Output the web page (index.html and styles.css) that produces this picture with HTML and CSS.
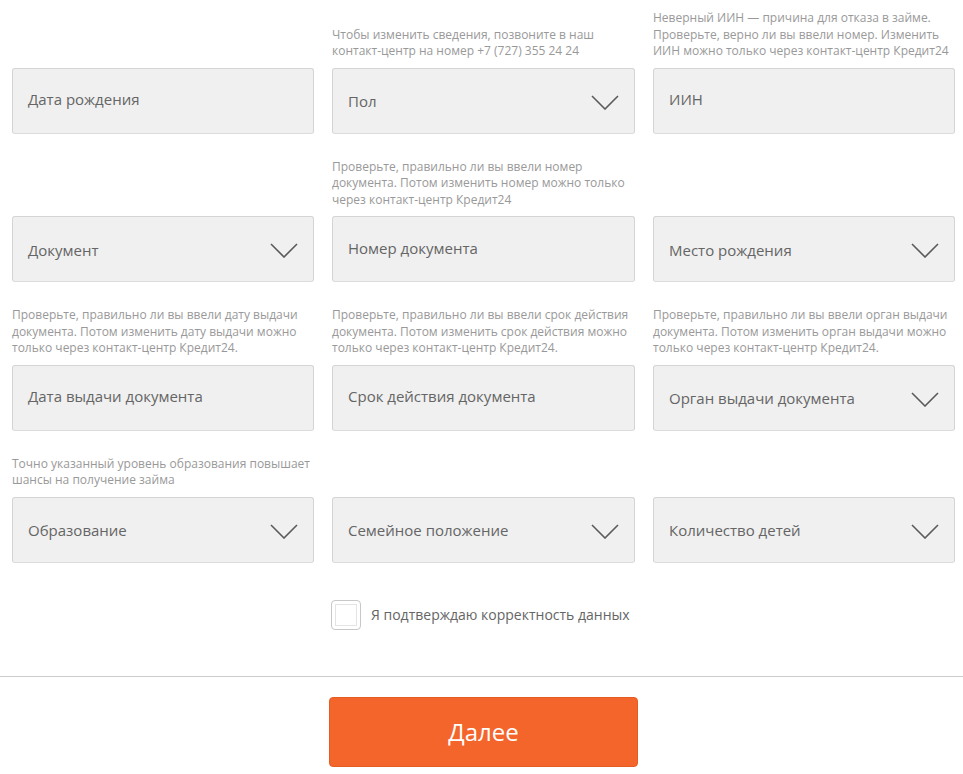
FILE: index.html
```html
<!DOCTYPE html>
<html lang="ru">
<head>
<meta charset="utf-8">
<title>Анкета</title>
<link rel="stylesheet" href="styles.css">
</head>
<body>
<form class="page">
  <div class="grid">
    <div class="cell">
      <div class="field input"><span class="ph">Дата рождения</span></div>
    </div>
    <div class="cell">
      <p class="hint">Чтобы изменить сведения, позвоните в наш контакт-центр на номер +7 (727) 355 24 24</p>
      <div class="field select"><span class="ph">Пол</span><svg class="chev" viewBox="0 0 28 15"><polyline points="1,1 14,14 27,1"/></svg></div>
    </div>
    <div class="cell">
      <p class="hint">Неверный ИИН — причина для отказа в займе. Проверьте, верно ли вы ввели номер. Изменить ИИН можно только через контакт-центр Кредит24</p>
      <div class="field input"><span class="ph">ИИН</span></div>
    </div>

    <div class="cell">
      <div class="field select"><span class="ph">Документ</span><svg class="chev" viewBox="0 0 28 15"><polyline points="1,1 14,14 27,1"/></svg></div>
    </div>
    <div class="cell">
      <p class="hint">Проверьте, правильно ли вы ввели номер документа. Потом изменить номер можно только через контакт-центр Кредит24</p>
      <div class="field input"><span class="ph">Номер документа</span></div>
    </div>
    <div class="cell">
      <div class="field select"><span class="ph">Место рождения</span><svg class="chev" viewBox="0 0 28 15"><polyline points="1,1 14,14 27,1"/></svg></div>
    </div>

    <div class="cell">
      <p class="hint">Проверьте, правильно ли вы ввели дату выдачи документа. Потом изменить дату выдачи можно только через контакт-центр Кредит24.</p>
      <div class="field input"><span class="ph">Дата выдачи документа</span></div>
    </div>
    <div class="cell">
      <p class="hint">Проверьте, правильно ли вы ввели срок действия документа. Потом изменить срок действия можно только через контакт-центр Кредит24.</p>
      <div class="field input"><span class="ph">Срок действия документа</span></div>
    </div>
    <div class="cell">
      <p class="hint">Проверьте, правильно ли вы ввели орган выдачи документа. Потом изменить орган выдачи можно только через контакт-центр Кредит24.</p>
      <div class="field select"><span class="ph">Орган выдачи документа</span><svg class="chev" viewBox="0 0 28 15"><polyline points="1,1 14,14 27,1"/></svg></div>
    </div>

    <div class="cell">
      <p class="hint">Точно указанный уровень образования повышает шансы на получение займа</p>
      <div class="field select"><span class="ph">Образование</span><svg class="chev" viewBox="0 0 28 15"><polyline points="1,1 14,14 27,1"/></svg></div>
    </div>
    <div class="cell">
      <div class="field select"><span class="ph">Семейное положение</span><svg class="chev" viewBox="0 0 28 15"><polyline points="1,1 14,14 27,1"/></svg></div>
    </div>
    <div class="cell">
      <div class="field select"><span class="ph">Количество детей</span><svg class="chev" viewBox="0 0 28 15"><polyline points="1,1 14,14 27,1"/></svg></div>
    </div>

    <label class="confirm">
      <span class="box"></span>
      <span class="confirm-text">Я подтверждаю корректность данных</span>
    </label>
  </div>

  <div class="divider"></div>

  <div class="actions">
    <button type="button" class="next">Далее</button>
  </div>
</form>
</body>
</html>
```

FILE: styles.css
```css
* {
  box-sizing: border-box;
}

html, body {
  margin: 0;
  padding: 0;
  background: #ffffff;
}

body {
  font-family: "Open Sans", "Noto Sans", "Liberation Sans", sans-serif;
  color: #666666;
}

.page {
  width: 963px;
  padding-top: 10px;
}

.grid {
  display: grid;
  grid-template-columns: 302px 303px 302px;
  column-gap: 18px;
  row-gap: 25px;
  padding-left: 12px;
}

.cell {
  display: flex;
  flex-direction: column;
  justify-content: flex-end;
}

.hint {
  margin: 0 0 8px 0;
  font-size: 12px;
  line-height: 16.5px;
  color: #999999;
}

.field {
  height: 66px;
  background: #f0f0f0;
  border: 1px solid #d4d4d4;
  border-bottom-color: #dcdcdc;
  border-radius: 3px;
  display: flex;
  align-items: center;
  padding: 0 15px 0 15px;
}

.field.input {
  padding-bottom: 3px;
}

.field.select {
  justify-content: space-between;
  padding-top: 1px;
}

.ph {
  font-size: 15px;
  color: #656565;
  white-space: nowrap;
}

.chev {
  width: 28px;
  height: 15px;
  flex: none;
  margin-top: 2px;
}

.chev polyline {
  fill: none;
  stroke: #5a5a5a;
  stroke-width: 1.6;
}

.confirm {
  grid-column: 2 / span 2;
  margin-top: 12px;
  margin-left: -1px;
  display: flex;
  align-items: center;
  gap: 10px;
}

.box {
  width: 30px;
  height: 30px;
  flex: none;
  border: 1px solid #c8c8c8;
  border-radius: 4px;
  background: #ffffff;
  box-shadow: inset 0 0 0 3px #ffffff, inset 0 0 0 4px #e4e4e4;
}

.confirm-text {
  font-size: 14px;
  color: #656565;
}

.divider {
  margin-top: 46px;
  height: 1px;
  background: #cccccc;
}

.actions {
  display: flex;
  justify-content: center;
  padding: 20px 0 0 4px;
}

.next {
  width: 309px;
  height: 70px;
  background: #f4652b;
  border: 1px solid #e65d24;
  border-radius: 4px;
  color: #ffffff;
  font-family: "Open Sans", "Noto Sans", "Liberation Sans", sans-serif;
  font-size: 24px;
  font-weight: 500;
  padding: 0 0 0 0;
  cursor: pointer;
}
```
